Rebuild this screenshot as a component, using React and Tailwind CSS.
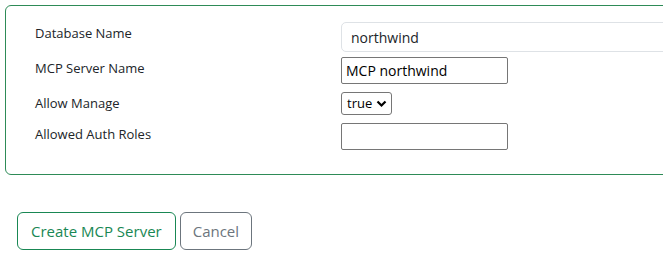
import React from "react";

export default function App() {
  const font = { fontFamily: '"Open Sans", "Noto Sans", sans-serif' };
  return (
    <div className="w-[663px] h-[258px] overflow-hidden bg-white text-[#212529]" style={font}>
      <div className="pt-[5px] pl-[5px]">
        <div className="w-[720px] h-[170px] border border-[#2e8b57] rounded-[6px] pt-[16px] pl-[29px]">
          <div className="flex flex-col">
            <div className="flex items-start h-[30px]">
              <div className="w-[306px] pt-px text-[13px] leading-[20px]">Database Name</div>
              <input
                readOnly
                value="northwind"
                className="w-[360px] h-[30px] border border-[#dee2e6] rounded-[5px] px-[9px] text-[14px] text-[#212529] outline-none"
                style={font}
              />
            </div>
            <div className="flex items-start h-[27px] mt-[5px]">
              <div className="w-[306px] pt-px text-[13px] leading-[20px]">MCP Server Name</div>
              <input
                readOnly
                value="MCP northwind"
                className="w-[167px] h-[27px] border border-[#767676] rounded-[2px] px-[4px] text-[14px] text-black outline-none"
                style={font}
              />
            </div>
            <div className="flex items-start h-[23px] mt-[8px]">
              <div className="w-[306px] pt-px text-[13px] leading-[20px]">Allow Manage</div>
              <div className="relative w-[51px] h-[23px] border border-[#767676] rounded-[3px] flex items-center pl-[5px] text-[13px] text-black">
                <span>true</span>
                <svg className="absolute right-[4px] top-[7px]" width="11" height="8" viewBox="0 0 11 8">
                  <path d="M1.5 1.5 L5.5 5.5 L9.5 1.5" fill="none" stroke="#000" strokeWidth="2.2" />
                </svg>
              </div>
            </div>
            <div className="flex items-start h-[27px] mt-[8px]">
              <div className="w-[306px] pt-px text-[13px] leading-[20px]">Allowed Auth Roles</div>
              <input
                readOnly
                value=""
                className="w-[167px] h-[27px] border border-[#767676] rounded-[2px] px-[4px] text-[14px] outline-none"
                style={font}
              />
            </div>
          </div>
        </div>
      </div>
      <div className="flex gap-[4px] pl-[17px] mt-[37px]">
        <button className="h-[38px] px-[13px] border border-[#198754] rounded-[6px] text-[#198754] text-[15px]" style={font}>
          Create MCP Server
        </button>
        <button className="h-[38px] px-[12px] border border-[#6c757d] rounded-[6px] text-[#6c757d] text-[15px]" style={font}>
          Cancel
        </button>
      </div>
    </div>
  );
}
